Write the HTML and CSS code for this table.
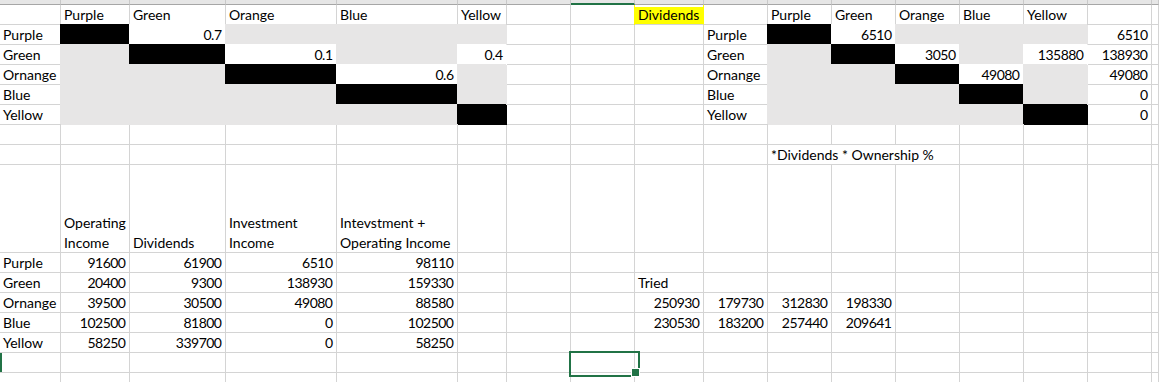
FILE: index.html
```html
<!DOCTYPE html>
<html>
<head>
<meta charset="utf-8">
<link rel="stylesheet" href="styles.css">
</head>
<body>
<div class="sheet">
<div class="h"></div><div class="h"></div><div class="h"></div><div class="h"></div><div class="h"></div><div class="h"></div><div class="h"></div><div class="h on"></div><div class="h"></div><div class="h"></div><div class="h"></div><div class="h"></div><div class="h"></div><div class="h"></div><div class="h"></div><div class="h"></div><div class="h"></div>

<div class="c"></div><div class="c">Purple</div><div class="c">Green</div><div class="c">Orange</div><div class="c">Blue</div><div class="c">Yellow</div><div class="c"></div><div class="c"></div><div class="c y">Dividends</div><div class="c"></div><div class="c">Purple</div><div class="c">Green</div><div class="c">Orange</div><div class="c">Blue</div><div class="c">Yellow</div><div class="c"></div><div class="c"></div>

<div class="c">Purple</div><div class="c k"></div><div class="c w r">0.7</div><div class="c g"></div><div class="c g"></div><div class="c g"></div><div class="c"></div><div class="c"></div><div class="c"></div><div class="c">Purple</div><div class="c k"></div><div class="c w r">6510</div><div class="c g"></div><div class="c g"></div><div class="c g"></div><div class="c r">6510</div><div class="c"></div>

<div class="c">Green</div><div class="c g"></div><div class="c k"></div><div class="c w r">0.1</div><div class="c g"></div><div class="c w r">0.4</div><div class="c"></div><div class="c"></div><div class="c"></div><div class="c">Green</div><div class="c g"></div><div class="c k"></div><div class="c w r">3050</div><div class="c g"></div><div class="c w r">135880</div><div class="c r">138930</div><div class="c"></div>

<div class="c">Ornange</div><div class="c g"></div><div class="c g"></div><div class="c k"></div><div class="c w r">0.6</div><div class="c g"></div><div class="c"></div><div class="c"></div><div class="c"></div><div class="c">Ornange</div><div class="c g"></div><div class="c g"></div><div class="c k"></div><div class="c w r">49080</div><div class="c g"></div><div class="c r">49080</div><div class="c"></div>

<div class="c">Blue</div><div class="c g"></div><div class="c g"></div><div class="c g"></div><div class="c k"></div><div class="c g"></div><div class="c"></div><div class="c"></div><div class="c"></div><div class="c">Blue</div><div class="c g"></div><div class="c g"></div><div class="c g"></div><div class="c k"></div><div class="c g"></div><div class="c r">0</div><div class="c"></div>

<div class="c">Yellow</div><div class="c g"></div><div class="c g"></div><div class="c g"></div><div class="c g"></div><div class="c k"></div><div class="c"></div><div class="c"></div><div class="c"></div><div class="c">Yellow</div><div class="c g"></div><div class="c g"></div><div class="c g"></div><div class="c g"></div><div class="c k"></div><div class="c r">0</div><div class="c"></div>

<div class="c"></div><div class="c"></div><div class="c"></div><div class="c"></div><div class="c"></div><div class="c"></div><div class="c"></div><div class="c"></div><div class="c"></div><div class="c"></div><div class="c"></div><div class="c"></div><div class="c"></div><div class="c"></div><div class="c"></div><div class="c"></div><div class="c"></div>

<div class="c"></div><div class="c"></div><div class="c"></div><div class="c"></div><div class="c"></div><div class="c"></div><div class="c"></div><div class="c"></div><div class="c"></div><div class="c"></div><div class="c span3">*Dividends * Ownership %</div><div class="c"></div><div class="c"></div><div class="c"></div><div class="c"></div>

<div class="c"></div><div class="c wrap">Operating Income</div><div class="c">Dividends</div><div class="c wrap">Investment Income</div><div class="c wrap">Intevstment + Operating Income</div><div class="c"></div><div class="c"></div><div class="c"></div><div class="c"></div><div class="c"></div><div class="c"></div><div class="c"></div><div class="c"></div><div class="c"></div><div class="c"></div><div class="c"></div><div class="c"></div>

<div class="c">Purple</div><div class="c r">91600</div><div class="c r">61900</div><div class="c r">6510</div><div class="c r">98110</div><div class="c"></div><div class="c"></div><div class="c"></div><div class="c"></div><div class="c"></div><div class="c"></div><div class="c"></div><div class="c"></div><div class="c"></div><div class="c"></div><div class="c"></div><div class="c"></div>

<div class="c">Green</div><div class="c r">20400</div><div class="c r">9300</div><div class="c r">138930</div><div class="c r">159330</div><div class="c"></div><div class="c"></div><div class="c"></div><div class="c">Tried</div><div class="c"></div><div class="c"></div><div class="c"></div><div class="c"></div><div class="c"></div><div class="c"></div><div class="c"></div><div class="c"></div>

<div class="c">Ornange</div><div class="c r">39500</div><div class="c r">30500</div><div class="c r">49080</div><div class="c r">88580</div><div class="c"></div><div class="c"></div><div class="c"></div><div class="c r">250930</div><div class="c r">179730</div><div class="c r">312830</div><div class="c r">198330</div><div class="c"></div><div class="c"></div><div class="c"></div><div class="c"></div><div class="c"></div>

<div class="c">Blue</div><div class="c r">102500</div><div class="c r">81800</div><div class="c r">0</div><div class="c r">102500</div><div class="c"></div><div class="c"></div><div class="c"></div><div class="c r">230530</div><div class="c r">183200</div><div class="c r">257440</div><div class="c r">209641</div><div class="c"></div><div class="c"></div><div class="c"></div><div class="c"></div><div class="c"></div>

<div class="c">Yellow</div><div class="c r">58250</div><div class="c r">339700</div><div class="c r">0</div><div class="c r">58250</div><div class="c"></div><div class="c"></div><div class="c"></div><div class="c"></div><div class="c"></div><div class="c"></div><div class="c"></div><div class="c"></div><div class="c"></div><div class="c"></div><div class="c"></div><div class="c"></div>

<div class="c selrow"></div><div class="c"></div><div class="c"></div><div class="c"></div><div class="c"></div><div class="c"></div><div class="c"></div><div class="c cur"></div><div class="c"></div><div class="c"></div><div class="c"></div><div class="c"></div><div class="c"></div><div class="c"></div><div class="c"></div><div class="c"></div><div class="c"></div>

<div class="c"></div><div class="c"></div><div class="c"></div><div class="c"></div><div class="c"></div><div class="c"></div><div class="c"></div><div class="c"></div><div class="c"></div><div class="c"></div><div class="c"></div><div class="c"></div><div class="c"></div><div class="c"></div><div class="c"></div><div class="c"></div><div class="c"></div>
</div>
</body>
</html>
```

FILE: styles.css
```css
* {
  box-sizing: border-box;
  margin: 0;
  padding: 0;
}

html,
body {
  width: 1159px;
  height: 382px;
  overflow: hidden;
  background: #ffffff;
}

body {
  font-family: Lato, "Open Sans", sans-serif;
  font-size: 14px;
  color: #000000;
}

.sheet {
  display: grid;
  grid-template-columns: 61px 69px 96px 111px 121px 49px 64px 64px 69px 64px 64px 64px 64px 64px 64px 64px 7px;
  grid-template-rows: 5px repeat(8, 20px) 88px repeat(7, 20px);
}

.h {
  background: #e6e6e6;
  border-right: 1px solid #c9c9c9;
  border-bottom: 1px solid #a6a6a6;
}

.h.on {
  border-bottom: 2px solid #217346;
}

.c {
  display: flex;
  align-items: flex-end;
  padding: 0 3px;
  border-right: 1px solid #d4d4d4;
  border-bottom: 1px solid #d4d4d4;
  white-space: nowrap;
  line-height: 18px;
}

.r {
  justify-content: flex-end;
  letter-spacing: -0.5px;
  padding-right: 3.5px;
}

.wrap {
  white-space: normal;
  line-height: 19.5px;
  padding-bottom: 0;
}

.span3 {
  grid-column: span 3;
}

.g {
  background: #e7e6e6;
  border-color: #e7e6e6;
  box-shadow: -1px -1px 0 0 #e7e6e6;
}

.k {
  background: #000000;
  border-color: #000000;
  box-shadow: -1px -1px 0 0 #000000;
}

.w {
  background: #ffffff;
  border-color: #ffffff;
  box-shadow: -1px -1px 0 0 #ffffff;
}

.y {
  background: linear-gradient(#ffffff 0 2px, #ffff00 2px);
  border-right-color: #ffff00;
  box-shadow: -1px 0 0 0 #ffff00;
}

.selrow {
  box-shadow: inset 2px 0 0 0 #217346;
}

.cur {
  position: relative;
}

.cur::after {
  content: "";
  position: absolute;
  left: -2px;
  top: -2px;
  width: 67px;
  height: 22px;
  border: 2px solid #217346;
}

.cur::before {
  content: "";
  position: absolute;
  left: 60px;
  top: 15px;
  width: 7px;
  height: 7px;
  background: #217346;
  border: 1px solid #ffffff;
  z-index: 2;
}
```
